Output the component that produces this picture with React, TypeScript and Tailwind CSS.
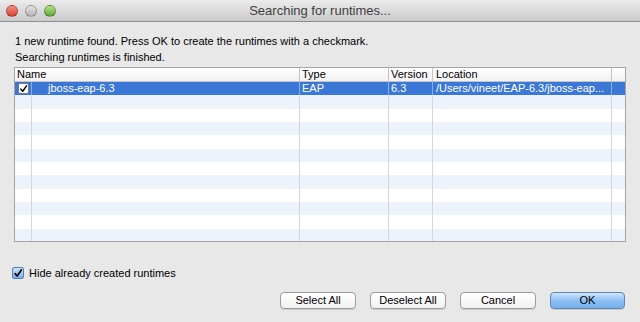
import React from 'react';

const rows = Array.from({ length: 12 }, (_, i) => i);

const CheckMark = ({ className }: { className?: string }) => (
	<svg viewBox="0 0 12 12" className={className}>
		<path d="M2.5 6.2 L5 9 L10 1.8" fill="none" stroke="currentColor" strokeWidth="2" strokeLinecap="round" strokeLinejoin="round" />
	</svg>
);

const TrafficLight = ({ color }: { color: string }) => (
	<div className={`h-[12px] w-[12px] rounded-full border border-black/25 ${color}`} />
);

const Button = ({ label, primary }: { label: string; primary?: boolean }) => (
	<button
		className={
			primary
				? 'h-[17px] w-[75px] rounded-[4px] border border-[#5f86b9] bg-gradient-to-b from-[#cfe5fc] via-[#8ec0f2] to-[#74b0ee] text-[11px] leading-none text-black shadow-[0_1px_0_rgba(0,0,0,0.12)]'
				: 'h-[17px] w-[76px] rounded-[4px] border border-[#9c9c9c] bg-gradient-to-b from-white to-[#f1f1f1] text-[11px] leading-none text-black shadow-[0_1px_0_rgba(0,0,0,0.12)]'
		}
	>
		{label}
	</button>
);

export default function App() {
	return (
		<div className="flex h-[322px] w-[640px] flex-col overflow-hidden bg-[#e8e8e8] font-['Liberation_Sans',sans-serif] text-[11px] text-black">
			<div className="grid h-[22px] shrink-0 grid-cols-[1fr_auto_1fr] items-center border-b border-[#8e8e8e] bg-gradient-to-b from-[#ececec] to-[#cbcbcb] px-[6px]">
				<div className="flex items-center gap-[7px]">
					<TrafficLight color="bg-gradient-to-b from-[#f58c83] to-[#d9412f]" />
					<TrafficLight color="bg-gradient-to-b from-[#e4e4e4] to-[#b4b4b4]" />
					<TrafficLight color="bg-gradient-to-b from-[#b6e48c] to-[#5ea62e]" />
				</div>
				<div className="text-[13px] text-[#3f3f3f]">Searching for runtimes...</div>
				<div />
			</div>

			<div className="flex flex-1 flex-col px-[14px] pt-[11px]">
				<p className="pl-[1px] leading-[16px]">1 new runtime found. Press OK to create the runtimes with a checkmark.</p>
				<p className="pl-[1px] leading-[16px]">Searching runtimes is finished.</p>

				<div className="mt-[2px] flex h-[175px] w-[612px] flex-col overflow-hidden border border-[#a3a3a3] bg-white">
					<div className="grid h-[14px] shrink-0 grid-cols-[285px_89px_44px_179px_13px] border-b border-[#c4c4c4] bg-gradient-to-b from-white to-[#f2f2f2] leading-[13px]">
						<div className="border-r border-[#c4c4c4] pl-[2px]">Name</div>
						<div className="border-r border-[#c4c4c4] pl-[2px]">Type</div>
						<div className="border-r border-[#c4c4c4] pl-[2px]">Version</div>
						<div className="border-r border-[#c4c4c4] pl-[3px]">Location</div>
						<div />
					</div>
					<div className="flex-1 overflow-hidden">
						{rows.map((i) => {
							const selected = i === 0;
							const line = selected ? 'border-[#8aaee6]' : 'border-[#d6d6d6]';
							const bg = selected ? 'bg-[#3a77d7] text-white' : i % 2 === 1 ? 'bg-[#edf3fb]' : 'bg-white';
							return (
								<div key={i} className={`grid h-[13.33px] grid-cols-[17px_268px_89px_44px_179px_13px] leading-[13px] ${bg}`}>
									<div className={`flex items-center justify-center border-r ${line}`}>
										{selected && (
											<div className="flex h-[11px] w-[11px] items-center justify-center rounded-[2px] border border-[#7a7a7a] bg-white text-black">
												<CheckMark className="h-[10px] w-[10px]" />
											</div>
										)}
									</div>
									<div className={`border-r pl-[16px] ${line}`}>{selected && 'jboss-eap-6.3'}</div>
									<div className={`border-r pl-[2px] ${line}`}>{selected && 'EAP'}</div>
									<div className={`border-r pl-[2px] ${line}`}>{selected && '6.3'}</div>
									<div className={`border-r pl-[3px] ${line}`}>{selected && '/Users/vineet/EAP-6.3/jboss-eap...'}</div>
									<div />
								</div>
							);
						})}
					</div>
				</div>

				<label className="mt-[23px] flex h-[16px] items-center gap-[5px] pl-0 -ml-[2px]">
					<span className="flex h-[12px] w-[12px] items-center justify-center rounded-[2px] border border-[#5b7fae] bg-gradient-to-b from-[#c9e1fa] to-[#77aee8] text-black">
						<CheckMark className="h-[11px] w-[11px]" />
					</span>
					<span>Hide already created runtimes</span>
				</label>

				<div className="mt-[11px] flex justify-end gap-[14px] pr-[1px]">
					<Button label="Select All" />
					<Button label="Deselect All" />
					<Button label="Cancel" />
					<Button label="OK" primary />
				</div>
			</div>
		</div>
	);
}
